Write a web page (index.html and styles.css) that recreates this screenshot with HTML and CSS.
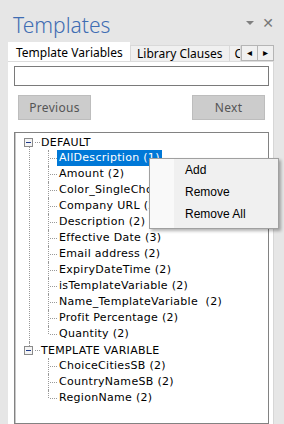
FILE: index.html
```html
<!DOCTYPE html>
<html lang="en">
<head>
  <meta charset="UTF-8" />
  <meta name="viewport" content="width=device-width, initial-scale=1.0" />
  <title>Templates</title>
  <link rel="stylesheet" href="styles.css">
</head>
<body>
  <div class="pane">
    <div class="pane-header">
      <h1 class="pane-title">Templates</h1>
      <div class="pane-controls">
        <span class="pane-menu"></span>
        <span class="pane-close">&#x2715;</span>
      </div>
    </div>

    <div class="tabs">
      <div class="tab active">Template Variables</div>
      <div class="tab">Library Clauses</div>
      <div class="tab cut">C</div>
      <div class="tab-scroll">
        <span class="scroll-btn">&#x25C2;</span>
        <span class="scroll-btn">&#x25B8;</span>
      </div>
    </div>

    <div class="panel">
      <input type="text" class="search" />
      <div class="nav-buttons">
        <button class="nav-btn">Previous</button>
        <button class="nav-btn">Next</button>
      </div>

      <div class="tree-box">
        <ul class="tree">
          <li class="group first">
            <div class="group-row"><span class="toggle"></span><span class="group-label">DEFAULT</span></div>
            <ul class="leaves">
              <li class="leaf"><span class="leaf-label selected">AllDescription (1)</span></li>
              <li class="leaf"><span class="leaf-label">Amount (2)</span></li>
              <li class="leaf"><span class="leaf-label">Color_SingleChoice (2)</span></li>
              <li class="leaf"><span class="leaf-label">Company URL (2)</span></li>
              <li class="leaf"><span class="leaf-label">Description (2)</span></li>
              <li class="leaf"><span class="leaf-label">Effective Date (3)</span></li>
              <li class="leaf"><span class="leaf-label">Email address (2)</span></li>
              <li class="leaf"><span class="leaf-label">ExpiryDateTime (2)</span></li>
              <li class="leaf"><span class="leaf-label">isTemplateVariable (2)</span></li>
              <li class="leaf"><span class="leaf-label">Name_TemplateVariable&nbsp; (2)</span></li>
              <li class="leaf"><span class="leaf-label">Profit Percentage (2)</span></li>
              <li class="leaf"><span class="leaf-label">Quantity (2)</span></li>
            </ul>
          </li>
          <li class="group last">
            <div class="group-row"><span class="toggle"></span><span class="group-label">TEMPLATE VARIABLE</span></div>
            <ul class="leaves">
              <li class="leaf"><span class="leaf-label">ChoiceCitiesSB (2)</span></li>
              <li class="leaf"><span class="leaf-label">CountryNameSB (2)</span></li>
              <li class="leaf"><span class="leaf-label">RegionName (2)</span></li>
            </ul>
          </li>
        </ul>
      </div>
    </div>
  </div>

  <div class="context-menu">
    <div class="menu-item">Add</div>
    <div class="menu-item">Remove</div>
    <div class="menu-item">Remove All</div>
  </div>
</body>
</html>
```

FILE: styles.css
```css
body {
  margin: 0;
  background-color: #e6e6e6;
  font-family: "Segoe UI", "Noto Sans", sans-serif;
  height: 424px;
  overflow: hidden;
  position: relative;
}

.pane {
  padding: 0 10px 0 8px;
  height: 424px;
  display: flex;
  flex-direction: column;
}

.pane-header {
  height: 42px;
  display: flex;
  justify-content: space-between;
  align-items: flex-start;
}

.pane-title {
  margin: 12px 0 0 5px;
  font-size: 21px;
  font-weight: 300;
  color: #3f6db3;
  line-height: 26px;
}

.pane-controls {
  display: flex;
  align-items: center;
  gap: 8px;
  margin-top: 15px;
  margin-right: 0;
}

.pane-menu {
  width: 0;
  height: 0;
  border-left: 4px solid transparent;
  border-right: 4px solid transparent;
  border-top: 4px solid #808080;
}

.pane-close {
  font-family: "DejaVu Sans", sans-serif;
  font-size: 14px;
  font-weight: bold;
  color: #777;
}

.tabs {
  display: flex;
  align-items: flex-end;
  height: 20px;
  font-size: 12px;
}

.tab {
  height: 17px;
  line-height: 16px;
  padding: 0 6px;
  background-color: #f0f0f0;
  border: 1px solid #d9d9d9;
  border-bottom: none;
  color: #000;
  white-space: nowrap;
  box-sizing: border-box;
}

.tab.active {
  height: 20px;
  line-height: 20px;
  width: 122px;
  padding: 0 7px;
  background-color: #fff;
  border-color: #fff;
}

.tab.cut {
  width: 14px;
  overflow: hidden;
  padding: 0 0 0 5px;
  border-left: none;
}

.tab-scroll {
  display: flex;
  align-self: flex-start;
  margin-top: 3px;
  border: 1px solid #b5b5b5;
  background-color: #f0f0f0;
}

.scroll-btn {
  width: 15px;
  height: 14px;
  line-height: 14px;
  font-size: 10px;
  text-align: center;
  color: #000;
  font-family: "DejaVu Sans", sans-serif;
}

.scroll-btn + .scroll-btn {
  border-left: 1px solid #b5b5b5;
}

.panel {
  flex: 1;
  background-color: #fff;
  border-top: 1px solid #dcdcdc;
  border-right: 1px solid #d6d6d6;
  padding: 4px 4px 0 6px;
  display: flex;
  flex-direction: column;
  margin-top: -1px;
}

.search {
  height: 20px;
  margin: 0;
  box-sizing: border-box;
  border: 1px solid #7a7a7a;
  padding: 0 4px;
}

.nav-buttons {
  display: flex;
  justify-content: space-between;
  padding: 9px 4px 0;
}

.nav-btn {
  width: 73px;
  height: 25px;
  margin: 0;
  background-color: #cccccc;
  border: 1px solid #bdbdbd;
  color: #555;
  font-family: "Segoe UI", "Noto Sans", sans-serif;
  font-size: 12px;
  letter-spacing: 0.3px;
}

.tree-box {
  flex: 1;
  margin-top: 12px;
  padding-top: 1px;
  border: 1px solid #828282;
  box-shadow: inset 1px 0 #c8c8c8;
  font-family: "DejaVu Sans", Verdana, sans-serif;
  font-size: 11px;
  letter-spacing: 0.3px;
  color: #000;
}

.tree,
.leaves {
  list-style: none;
  margin: 0;
  padding: 0;
}

.tree {
  padding-left: 9px;
}

.group {
  position: relative;
}

.group.first::before {
  content: "";
  position: absolute;
  left: 5px;
  top: 13px;
  bottom: 0;
  border-left: 1px dotted #999;
}

.group.last::before {
  content: "";
  position: absolute;
  left: 5px;
  top: 0;
  height: 4px;
  border-left: 1px dotted #999;
}

.group-row {
  display: flex;
  align-items: center;
  height: 16px;
}

.toggle {
  width: 7px;
  height: 7px;
  border: 1px solid #8a8a8a;
  background: linear-gradient(#1e3a8a, #1e3a8a) center / 5px 1px no-repeat, #f4f4f4;
  flex-shrink: 0;
}

.group-label {
  margin-left: 2px;
  padding-left: 6px;
  background: repeating-linear-gradient(90deg, #999 0 1px, transparent 1px 2px) left center / 5px 1px no-repeat;
}

.leaves {
  margin-left: 24px;
}

.leaf {
  position: relative;
  height: 16px;
  padding-left: 9px;
  display: flex;
  align-items: center;
}

.leaf::before {
  content: "";
  position: absolute;
  left: 0;
  top: 0;
  bottom: 0;
  border-left: 1px dotted #999;
}

.leaf:last-child::before {
  bottom: 8px;
}

.leaf::after {
  content: "";
  position: absolute;
  left: 2px;
  top: 8px;
  width: 7px;
  border-top: 1px dotted #999;
}

.leaf-label {
  padding: 0 2px;
  line-height: 16px;
  white-space: nowrap;
}

.leaf-label.selected {
  background-color: #0078d7;
  color: #fff;
}

.context-menu {
  position: absolute;
  left: 149px;
  top: 158px;
  width: 128px;
  padding: 0 0 3px;
  background: linear-gradient(90deg, #f9f9f9 0 24px, #f0f0f0 24px);
  border: 1px solid #a0a0a0;
  box-shadow: 2px 2px 3px rgba(0, 0, 0, 0.3);
  font-family: "Segoe UI", "Liberation Sans", sans-serif;
  font-size: 12px;
}

.menu-item {
  height: 22px;
  line-height: 22px;
  padding-left: 35px;
  color: #000;
}
```
